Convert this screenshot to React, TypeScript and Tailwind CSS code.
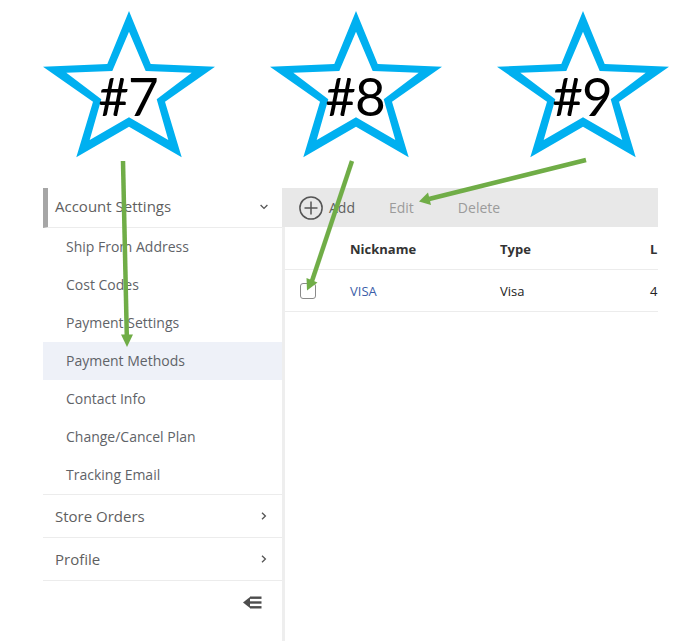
const font = { fontFamily: '"Open Sans", sans-serif' };

function Star({ label }: { label: string }) {
  return (
    <div className="relative w-[172px] h-[188px] shrink-0">
      <svg width="172" height="188" viewBox="43 0 172 188" className="block">
        <path
          fillRule="evenodd"
          fill="#00b0f0"
          d="M129 11L150.7 64L215 66.7L165 101.7L181.7 157.3L129 126.7L76.3 157.3L93 101.7L43 66.7L107.3 64Z M129 31.7L112.3 71L66.3 72.7L101.3 99.3L89.7 140L129 117.3L168.3 140L156.7 99.3L191.7 72.7L145.7 71Z"
        />
      </svg>
      <div className="absolute left-0 right-[2px] top-[61px] text-center text-[53px] tracking-[-1px] leading-[70px] text-black font-['Lato',sans-serif]">
        {label}
      </div>
    </div>
  );
}

function ChevronRight() {
  return (
    <svg width="6" height="8" viewBox="0 0 6 8" fill="none" stroke="#555" strokeWidth="1.3">
      <path d="M1 0.8L4.4 4L1 7.2" />
    </svg>
  );
}

function SubItem({ label, active }: { label: string; active?: boolean }) {
  return (
    <div className={`h-[38px] pl-[23px] pb-[2px] flex items-center text-[14px] text-[#5f6368] ${active ? 'bg-[#eef1f8]' : ''}`}>
      {label}
    </div>
  );
}

function Group({ label }: { label: string }) {
  return (
    <div className="h-[43px] border-b border-[#ececec] pl-3 pr-[15px] flex items-center justify-between text-[15px] text-[#5f5f5f]">
      <span>{label}</span>
      <ChevronRight />
    </div>
  );
}

export default function App() {
  return (
    <div className="relative w-[696px] h-[641px] overflow-hidden bg-white" style={font}>
      <div className="flex gap-[55px] pl-[43px] h-[188px]">
        <Star label="#7" />
        <Star label="#8" />
        <Star label="#9" />
      </div>

      <div className="flex pl-[43px] h-[453px]">
        <div className="w-[239px] shrink-0">
          <div className="h-[40px] border-b border-[#ececec] border-l-[5px] border-l-[#a6a6a6] pl-[7px] pr-[14px] pb-[2px] flex items-center justify-between text-[15px] text-[#5f5f5f]">
            <span>Account Settings</span>
            <svg width="8" height="6" viewBox="0 0 8 6" fill="none" stroke="#555" strokeWidth="1.3">
              <path d="M0.6 1L4 4.4L7.4 1" />
            </svg>
          </div>
          <SubItem label="Ship From Address" />
          <SubItem label="Cost Codes" />
          <SubItem label="Payment Settings" />
          <SubItem label="Payment Methods" active />
          <SubItem label="Contact Info" />
          <SubItem label="Change/Cancel Plan" />
          <SubItem label="Tracking Email" />
          <div className="border-t border-[#ececec]">
            <Group label="Store Orders" />
            <Group label="Profile" />
          </div>
          <div className="flex justify-end pr-[20px] pt-[15px]">
            <svg width="19" height="13" viewBox="0 0 19 13" fill="#4d4d4d">
              <path d="M0 6.5L7 1V12Z" />
              <rect x="7" y="0.5" width="11.5" height="2.4" />
              <rect x="7" y="5.3" width="11.5" height="2.4" />
              <rect x="7" y="10.1" width="11.5" height="2.4" />
            </svg>
          </div>
        </div>

        <div className="w-[376px] shrink-0 overflow-hidden">
          <div className="h-[39px] bg-[#e8e8e8] flex items-center text-[14px]">
            <svg width="24" height="24" viewBox="0 0 24 24" fill="none" stroke="#555" strokeWidth="1.5" className="ml-[17px]">
              <circle cx="12" cy="12" r="11.1" />
              <path d="M12 5.5V18.5M5.5 12H18.5" />
            </svg>
            <span className="ml-[6px] text-[#5f5f5f]">Add</span>
            <span className="ml-[34px] text-[#9b9b9b]">Edit</span>
            <span className="ml-[44px] text-[#9b9b9b]">Delete</span>
          </div>
          <div className="h-[414px] border-l-[3px] border-[#eeeeee]">
            <div className="h-[43px] border-b border-[#ececec] pt-[3px] flex items-center text-[13px] font-bold text-[#333]">
              <span className="ml-[65px] w-[150px] shrink-0">Nickname</span>
              <span className="w-[150px] shrink-0">Type</span>
              <span className="shrink-0">L</span>
            </div>
            <div className="h-[42px] border-b border-[#ececec] flex items-center text-[13px] text-[#222]">
              <span className="ml-[15px] w-[16px] h-[16px] shrink-0 rounded-[3px] border border-[#8a8a8a] bg-white" />
              <span className="ml-[34px] w-[150px] shrink-0 pt-[2px] text-[#3b5ea8]">VISA</span>
              <span className="w-[150px] shrink-0 pt-[2px]">Visa</span>
              <span className="shrink-0 pt-[2px]">4</span>
            </div>
          </div>
        </div>
      </div>

      <svg width="696" height="641" className="absolute inset-0 pointer-events-none">
        <g stroke="#70ad47" strokeWidth="4.5" fill="none">
          <path d="M123 161L126.8 336" />
          <path d="M352 161L312 281" />
          <path d="M586 160L429 199" />
        </g>
        <g fill="#70ad47">
          <path d="M127 347L121 334.5L133 334.5Z" />
          <path d="M307 290.5L306.5 278L317.5 282.5Z" />
          <path d="M419 201.5L428 192.5L431 205Z" />
        </g>
      </svg>
    </div>
  );
}
